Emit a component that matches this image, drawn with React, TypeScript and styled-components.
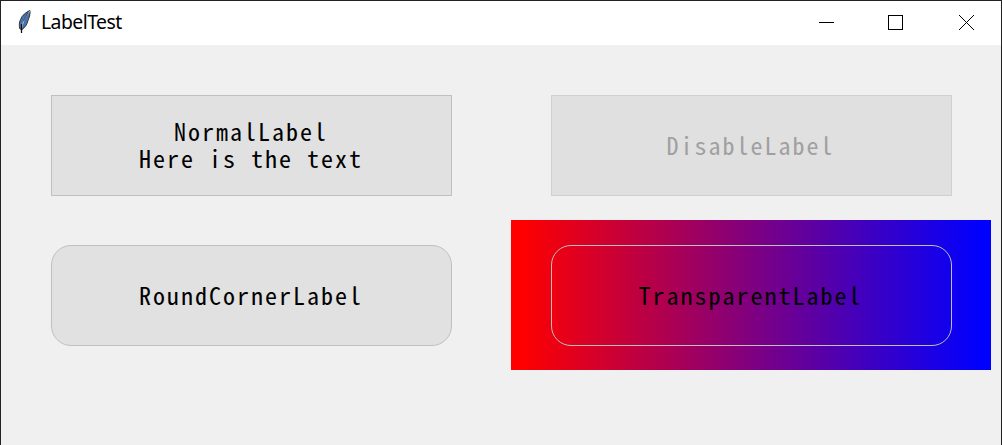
import React from "react";
import styled, { createGlobalStyle } from "styled-components";

const GlobalStyle = createGlobalStyle`
  * { box-sizing: border-box; }
  body { margin: 0; overflow: hidden; }
`;

const Window = styled.div`
  display: flex;
  flex-direction: column;
  width: 1002px;
  height: 445px;
  border: 1px solid #222225;
  border-bottom: 0;
  background: #f0f0f0;
`;

const TitleBar = styled.header`
  display: flex;
  align-items: center;
  height: 44px;
  background: #fff;
`;

const Feather = styled.svg`
  width: 16px;
  height: 26px;
  margin: 0 0 2px 16px;
`;

const Title = styled.span`
  margin: 0 0 2px 8px;
  flex: 1;
  font: 19.4px/28px "Noto Sans", sans-serif;
  letter-spacing: -0.55px;
  color: #000;
`;

const WindowButton = styled.button`
  display: flex;
  align-items: center;
  justify-content: center;
  width: 70px;
  height: 44px;
  padding: 0 0 1px;
  border: 0;
  background: none;

  &:nth-last-child(2) {
    padding-right: 2px;
  }
`;

const Content = styled.main`
  display: grid;
  grid-template-columns: 401px 480px;
  grid-template-rows: 150px 150px;
  column-gap: 59px;
  padding: 25px 0 0 50px;
  align-items: center;
  justify-items: center;
`;

const Label = styled.div<{ $round?: boolean; $disabled?: boolean; $clear?: boolean }>`
  display: flex;
  align-items: center;
  justify-content: center;
  width: 401px;
  height: 101px;
  margin-top: 1px;
  padding: 0 1px 3px 0;
  border: 1px solid ${(p) => (p.$disabled ? "#d0d0d0" : "#c0c0c0")};
  border-radius: ${(p) => (p.$round ? "20px" : "0")};
  background: ${(p) => (p.$clear ? "transparent" : p.$disabled ? "#e0e0e0" : "#e1e1e1")};
  color: ${(p) => (p.$disabled ? "#a0a0a0" : "#000")};
  font: 24px/27px "Noto Sans CJK SC", monospace;
  font-feature-settings: "hwid" 1;
  letter-spacing: 2px;
  text-align: center;
  white-space: pre;
`;

const Gradient = styled.div`
  display: flex;
  align-items: center;
  justify-content: center;
  width: 480px;
  height: 150px;
  background: linear-gradient(to right, #f00 2%, #00f 98%);
`;

export default function App() {
  return (
    <Window>
      <GlobalStyle />
      <TitleBar>
        <Feather viewBox="0 0 16 26">
          <path d="M13 1.5C9 3 5 6.500 3.500 10.500 2 14 2 17 3 20l2 .5c3-2 5-5 6-9 1-3 2.500-6 2-10Z" fill="#4473ad" stroke="#333" strokeWidth="1" />
          <path d="M13 2C8 8 6 13 4.500 20" fill="none" stroke="#a8bed8" strokeWidth="1" />
          <path d="M4.500 15v9" fill="none" stroke="#111" strokeWidth="1.300" />
          <path d="M11 3.500 6.500 12" fill="none" stroke="#111" strokeWidth=".6" />
        </Feather>
        <Title>LabelTest</Title>
        <WindowButton aria-label="Minimize">
          <svg width="15" height="15" shapeRendering="crispEdges"><path d="M0 7.5h15" stroke="#000" /></svg>
        </WindowButton>
        <WindowButton aria-label="Maximize">
          <svg width="15" height="15" shapeRendering="crispEdges"><path d="M.5 .5h14v14h-14Z" fill="none" stroke="#000" /></svg>
        </WindowButton>
        <WindowButton aria-label="Close">
          <svg width="15" height="15"><path d="M0 0l15 15M15 0L0 15" stroke="#000" /></svg>
        </WindowButton>
      </TitleBar>
      <Content>
        <Label>{"NormalLabel\nHere is the text"}</Label>
        <Label $disabled>DisableLabel</Label>
        <Label $round>RoundCornerLabel</Label>
        <Gradient>
          <Label $round $clear>TransparentLabel</Label>
        </Gradient>
      </Content>
    </Window>
  );
}
